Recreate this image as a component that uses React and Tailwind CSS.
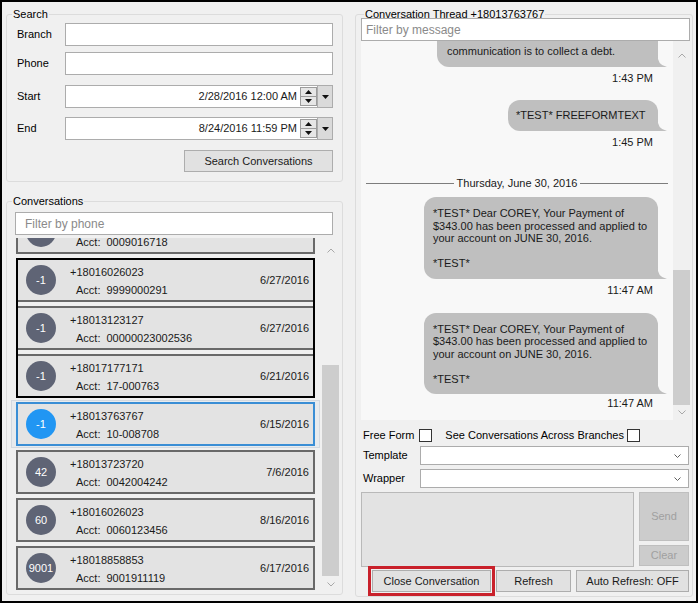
import React from 'react';

const conversations = [
  { id: 0, count: '-1', phone: '+18016026023', acct: '0009016718', date: '6/29/2016' },
  { id: 1, count: '-1', phone: '+18016026023', acct: '9999000291', date: '6/27/2016' },
  { id: 2, count: '-1', phone: '+18013123127', acct: '00000023002536', date: '6/27/2016' },
  { id: 3, count: '-1', phone: '+18017177171', acct: '17-000763', date: '6/21/2016' },
  { id: 4, count: '-1', phone: '+18013763767', acct: '10-008708', date: '6/15/2016' },
  { id: 5, count: '42', phone: '+18013723720', acct: '0042004242', date: '7/6/2016' },
  { id: 6, count: '60', phone: '+18016026023', acct: '0060123456', date: '8/16/2016' },
  { id: 7, count: '9001', phone: '+18018858853', acct: '9001911119', date: '6/17/2016' },
];

const SELECTED = 4;

const ScrollArrow = ({ up }) => (
  <svg width="8" height="5" viewBox="0 0 8 5">
    <polyline points={up ? '0.5,4.5 4,1 7.5,4.5' : '0.5,0.5 4,4 7.5,0.5'} fill="none" stroke="#a8a8a8" strokeWidth="1" />
  </svg>
);

const Tri = ({ up }) => (
  <svg width="7" height="4" viewBox="0 0 7 4">
    <path d={up ? 'M0 4 L3.5 0 L7 4 Z' : 'M0 0 L7 0 L3.5 4 Z'} fill="#111" />
  </svg>
);

const ComboChevron = () => (
  <svg width="7" height="4" viewBox="0 0 7 4">
    <polyline points="0.5,0.5 3.5,3.5 6.5,0.5" fill="none" stroke="#606060" strokeWidth="1" />
  </svg>
);

const DateBox = ({ value }) => (
  <div className="flex h-[23px] w-[268px] border border-[#acacac] bg-white">
    <div className="flex-1 text-right pr-[3px] leading-[21px] text-[#1a1a1a]">{value}</div>
    <div className="flex flex-col w-[17px] my-[1px]">
      <div className="flex-1 flex items-center justify-center bg-[#e6e6e6] border border-[#9c9c9c]"><Tri up /></div>
      <div className="flex-1 flex items-center justify-center bg-[#e6e6e6] border border-t-0 border-[#9c9c9c]"><Tri /></div>
    </div>
    <div className="w-[16px] -my-px -mr-px flex items-center justify-center bg-[#dadada] border border-[#acacac]"><Tri /></div>
  </div>
);

const ConvItem = ({ c, selected }) => (
  <div className={`h-[44px] flex items-center border-2 bg-[#e3e3e3] ${selected ? 'border-[#3a8ed5]' : 'border-[#696969]'}`}>
    <div className={`ml-[8px] w-[30px] h-[30px] shrink-0 rounded-full flex items-center justify-center text-white ${selected ? 'bg-[#2196f3]' : 'bg-[#5f6475]'}`}>
      {c.count}
    </div>
    <div className="ml-[14px] self-stretch pt-[6px] text-[#1a1a1a]">
      <div className="leading-[13px]">{c.phone}</div>
      <div className="leading-[13px] mt-[5px] ml-[6px]">
        Acct:<span className="ml-[6px]">{c.acct}</span>
      </div>
    </div>
    <div className="ml-auto mr-[4px] text-[#1a1a1a]">{c.date}</div>
  </div>
);

const Row = ({ c }) =>
  c.id === SELECTED ? (
    <div className="px-[4px] py-[1px] border border-[#d3d9e0] bg-[#e8ebee]">
      <ConvItem c={c} selected />
    </div>
  ) : (
    <div className="px-[5px] py-[2px]">
      <ConvItem c={c} />
    </div>
  );

const Bubble = ({ lines, className }) => (
  <div className={`relative mr-[15px] bg-[#bfbfbf] rounded-[12px] rounded-br-none text-[#1a1a1a] whitespace-nowrap ${className}`}>
    {lines.map((l, i) => (
      <div key={i}>{l || '\u00a0'}</div>
    ))}
    <svg className="absolute -right-[9px] bottom-0" width="10" height="14" viewBox="0 0 10 14">
      <path d="M0 0 Q0 12 10 14 L0 14 Z" fill="#bfbfbf" />
    </svg>
  </div>
);

const Stamp = ({ children, className }) => (
  <div className={`mr-[20px] leading-[13px] text-[#1a1a1a] ${className}`}>{children}</div>
);

const payment = [
  '*TEST* Dear COREY, Your Payment of',
  '$343.00 has been processed and applied to',
  'your account on JUNE 30, 2016.',
  '',
  '*TEST*',
];

const Checkbox = () => <div className="w-[13px] h-[13px] border border-[#333] bg-white" />;

const Combo = () => (
  <div className="w-[269px] h-[19px] border border-[#acacac] bg-white flex items-center justify-end pr-[7px]">
    <ComboChevron />
  </div>
);

const Btn = ({ children, className }) => (
  <button className={`h-[22px] bg-[#e1e1e1] border border-[#adadad] text-[#1a1a1a] ${className}`}>{children}</button>
);

export default function App() {
  const head = conversations[0];
  const group = conversations.slice(1, 4);
  const rest = conversations.slice(4);

  return (
    <div className="w-[698px] h-[603px] flex border-2 border-black bg-[#f0f0f0] text-[11px] text-black font-['Liberation_Sans',Arial,sans-serif] overflow-hidden">
      {/* Left column */}
      <div className="ml-[4px] mt-[5px] w-[337px] flex flex-col">
        <fieldset className="border border-[#dcdcdc] rounded-[3px] flex flex-col pb-[9px]">
          <legend className="ml-[5px] px-[1px] leading-[14px]">Search</legend>
          {['Branch', 'Phone'].map((l, i) => (
            <div key={l} className={`flex items-center pl-[10px] ${i === 0 ? 'mt-[2px]' : 'mt-[6px]'}`}>
              <span className="w-[48px]">{l}</span>
              <div className="w-[268px] h-[23px] border border-[#acacac] bg-white" />
            </div>
          ))}
          <div className="flex items-center pl-[10px] mt-[10px]">
            <span className="w-[48px]">Start</span>
            <DateBox value="2/28/2016 12:00 AM" />
          </div>
          <div className="flex items-center pl-[10px] mt-[9px]">
            <span className="w-[48px]">End</span>
            <DateBox value="8/24/2016 11:59 PM" />
          </div>
          <Btn className="self-end mr-[9px] mt-[10px] w-[149px]">Search Conversations</Btn>
        </fieldset>

        <fieldset className="mt-[12px] border border-[#dcdcdc] rounded-[3px] flex flex-col pb-[2px]">
          <legend className="ml-[5px] px-[1px] leading-[14px]">Conversations</legend>
          <input
            className="ml-[8px] mr-[9px] mt-[4px] h-[23px] border border-[#acacac] bg-white pl-[9px] text-[12px] outline-none placeholder:text-[#8a8a8a]"
            placeholder="Filter by phone"
          />
          <div className="ml-[4px] mr-[3px] mt-[3px] h-[354px] flex gap-[2px]">
            <div className="w-[309px] overflow-hidden">
              <div className="-mt-[30px]">
                <Row c={head} />
                <div className="relative">
                  {group.map((c) => (
                    <Row key={c.id} c={c} />
                  ))}
                  <div className="absolute left-[5px] right-[5px] top-[2px] bottom-[2px] border-2 border-black pointer-events-none" />
                </div>
                {rest.map((c) => (
                  <Row key={c.id} c={c} />
                ))}
              </div>
            </div>
            <div className="w-[17px] flex flex-col">
              <div className="h-[24px] flex items-center justify-center"><ScrollArrow up /></div>
              <div className="flex-1">
                <div className="mt-[103px] h-[211px] bg-[#cdcdcd]" />
              </div>
              <div className="h-[16px] flex items-center justify-center"><ScrollArrow /></div>
            </div>
          </div>
        </fieldset>
      </div>

      {/* Right column */}
      <div className="ml-[12px] mt-[5px] w-[338px] flex flex-col">
        <fieldset className="border border-[#dcdcdc] rounded-[3px] flex flex-col pb-[4px]">
          <legend className="ml-[8px] px-[1px] leading-[14px]">Conversation Thread +18013763767</legend>
          <input
            className="ml-[5px] mr-[2px] -mt-[3px] h-[23px] border border-[#acacac] bg-white pl-[4px] text-[12px] outline-none placeholder:text-[#8a8a8a]"
            placeholder="Filter by message"
          />
          <div className="ml-[5px] mr-[2px] h-[379px] flex bg-[#f8f8f8]">
            <div className="flex-1 overflow-hidden">
              <div className="flex flex-col items-end -mt-[32px]">
                <Bubble
                  className="w-[221px] pl-[10px] pt-[10px] pb-[9px] leading-[13px]"
                  lines={['*TEST* Please contact us about your account.', '', 'communication is to collect a debt.']}
                />
                <Stamp className="mt-[5px]">1:43 PM</Stamp>
                <Bubble className="mt-[15px] w-[150px] pl-[8px] pt-[9px] pb-[9px] leading-[13px]" lines={['*TEST* FREEFORMTEXT']} />
                <Stamp className="mt-[5px]">1:45 PM</Stamp>
                <div className="self-stretch mt-[28px] ml-[5px] mr-[5px] flex items-center gap-[3px] leading-[13px] text-[#1a1a1a]">
                  <div className="flex-1 h-px bg-[#7d7d7d]" />
                  <span>Thursday, June 30, 2016</span>
                  <div className="flex-1 h-px bg-[#7d7d7d]" />
                </div>
                <Bubble className="mt-[7px] w-[234px] pl-[9px] pt-[10px] pb-[9px] leading-[12.5px]" lines={payment} />
                <Stamp className="mt-[5px]">11:47 AM</Stamp>
                <Bubble className="mt-[16px] w-[234px] pl-[9px] pt-[10px] pb-[9px] leading-[12.5px]" lines={payment} />
                <Stamp className="mt-[3px]">11:47 AM</Stamp>
              </div>
            </div>
            <div className="w-[17px] flex flex-col bg-[#f0f0f0]">
              <div className="h-[28px] flex items-center justify-center"><ScrollArrow up /></div>
              <div className="flex-1">
                <div className="mt-[201px] h-[135px] bg-[#cdcdcd]" />
              </div>
              <div className="h-[15px] flex items-center justify-center"><ScrollArrow /></div>
            </div>
          </div>

          <div className="mt-[8px] h-[14px] pl-[7px] flex items-center">
            <span>Free Form</span>
            <div className="ml-[5px]"><Checkbox /></div>
            <span className="ml-[13px]">See Conversations Across Branches</span>
            <div className="ml-[3px]"><Checkbox /></div>
          </div>
          <div className="mt-[4px] pl-[7px] flex items-center">
            <span className="w-[57px]">Template</span>
            <Combo />
          </div>
          <div className="mt-[4px] pl-[7px] flex items-center">
            <span className="w-[57px]">Wrapper</span>
            <Combo />
          </div>
          <div className="mt-[4px] ml-[5px] flex gap-[5px]">
            <div className="w-[273px] h-[75px] border border-[#b9b9b9] bg-[#e3e3e3]" />
            <div className="w-[50px] flex flex-col gap-[4px]">
              <button className="h-[49px] bg-[#cccccc] border border-[#bfbfbf] text-[#a0a0a0]">Send</button>
              <button className="h-[21px] bg-[#cccccc] border border-[#bfbfbf] text-[#a0a0a0]">Clear</button>
            </div>
          </div>
          <div className="mt-[3px] pl-[16px] flex gap-[5px]">
            <Btn className="w-[119px] outline-3 outline-solid outline-[#c9212b] outline-offset-1">Close Conversation</Btn>
            <Btn className="w-[75px]">Refresh</Btn>
            <Btn className="w-[113px]">Auto Refresh: OFF</Btn>
          </div>
        </fieldset>
      </div>
    </div>
  );
}
